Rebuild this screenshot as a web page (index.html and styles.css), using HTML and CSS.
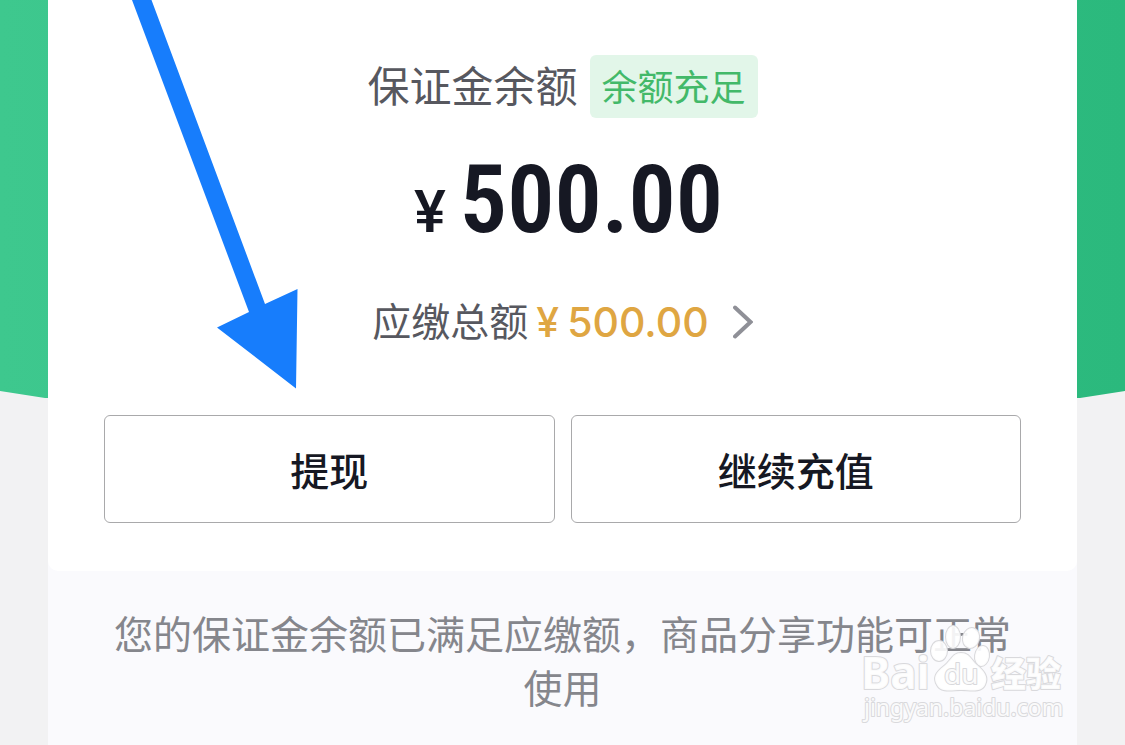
FILE: index.html
```html
<!DOCTYPE html>
<html lang="zh-CN">
<head>
<meta charset="utf-8">
<meta name="viewport" content="width=device-width, initial-scale=1">
<title>保证金余额</title>
<link rel="stylesheet" href="styles.css">
</head>
<body>
<div class="backdrop"></div>
<main class="page">
  <section class="card">
    <div class="balance-head">
      <h1 class="balance-title">保证金余额</h1>
      <span class="badge">余额充足</span>
    </div>
    <p class="balance"><span class="balance-sign">¥</span><span class="balance-value">500.00</span></p>
    <a class="due" href="#">
      <span class="due-label">应缴总额</span>
      <span class="due-sign">¥</span>
      <span class="due-value">500.00</span>
      <svg class="chevron" viewBox="0 0 20 34" aria-hidden="true"><path d="M2 2.500 17.500 17 2 31.500"/></svg>
    </a>
    <div class="actions">
      <button class="action" type="button">提现</button>
      <button class="action" type="button">继续充值</button>
    </div>
  </section>
  <p class="note">您的保证金余额已满足应缴额，商品分享功能可正常使用</p>
</main>
<svg class="arrow" viewBox="0 0 300 390" aria-hidden="true"><path d="M132 0H151.500L265 304 297.500 289 296 388.500 217 327.500 249 312Z"/></svg>
<svg class="watermark" viewBox="0 0 245 145" aria-hidden="true">
  <text class="mark-brand" x="21" y="87">Bai</text>
  <g class="mark-paw">
    <ellipse cx="99" cy="49" rx="8" ry="10"/>
    <ellipse cx="113" cy="35" rx="7" ry="11"/>
    <ellipse cx="131" cy="36" rx="8" ry="10" transform="rotate(14 131 36)"/>
    <ellipse cx="142" cy="54" rx="7" ry="10" transform="rotate(8 142 54)"/>
    <path d="M121 51C112 51 111 59 104 64C95 71 93 76 97 83C101 91 112 88 121 88C130 88 141 91 145 83C149 75 144 69 137 63C131 58 130 51 121 51Z"/>
  </g>
  <text class="mark-du" x="104" y="82">du</text>
  <text class="mark-name" x="151" y="85">经验</text>
  <text class="mark-url" x="24" y="114">jingyan.baidu.com</text>
</svg>
</body>
</html>
```
FILE: styles.css
```css
* { box-sizing: border-box; }

body {
  margin: 0;
  min-height: 100vh;
  position: relative;
  overflow: hidden;
  background: #f2f2f3;
  font-family: "Noto Sans CJK SC", sans-serif;
  color: #161823;
}

.backdrop {
  position: absolute;
  inset: 0 0 auto;
  height: 400px;
  background: linear-gradient(90deg, #3ec88e, #2bb97d);
  clip-path: polygon(0 0, 100% 0, 100% 391px, 96% 398px, 4% 398px, 0 391px);
}

.page {
  position: relative;
  min-height: 100vh;
  margin: 0 48px;
  background: #fafafd;
}

.card {
  padding: 55px 56px 48px;
  border-radius: 0 0 10px 10px;
  background: #fff;
  display: flex;
  flex-direction: column;
  align-items: center;
}

.balance-head {
  display: flex;
  align-items: center;
  gap: 12px;
}

.balance-title {
  margin: 0;
  padding-bottom: 5px;
  font-size: 42px;
  line-height: 58px;
  font-weight: 400;
  color: #57585f;
}

.badge {
  padding: 0 12px 3px;
  border-radius: 6px;
  background: #e2f6e9;
  color: #43b969;
  font-size: 36px;
  line-height: 60px;
}

.balance {
  margin: 22px 0 0;
  padding-left: 12px;
  display: flex;
  align-items: baseline;
  gap: 14px;
  font-family: "Roboto Condensed", Roboto, sans-serif;
  font-weight: 600;
  line-height: 120px;
}

.balance-sign {
  font-family: Roboto, sans-serif;
  font-size: 60px;
  font-weight: 500;
}

.balance-value { font-size: 94px; }

.due {
  margin-top: 20px;
  display: flex;
  align-items: center;
  color: #57585f;
  font-size: 39px;
  line-height: 60px;
  text-decoration: none;
}

.due-label {
  padding-bottom: 6px;
  line-height: 54px;
}

.due-sign,
.due-value {
  margin-left: 8px;
  color: #dfa642;
  font-family: Inter, sans-serif;
  font-size: 41px;
  font-weight: 500;
}

.chevron {
  width: 20px;
  height: 34px;
  margin-left: 24px;
  fill: none;
  stroke: #8f9097;
  stroke-width: 4;
  stroke-linecap: round;
}

.actions {
  width: 100%;
  margin-top: 63px;
  display: grid;
  grid-template-columns: 1fr 1fr;
  gap: 16px;
}

.action {
  height: 108px;
  padding: 0;
  border: 1px solid #a9a9ab;
  border-radius: 6px;
  background: #fff;
  color: #161823;
  font: 500 39px/60px "Noto Sans CJK SC", sans-serif;
}

.note {
  margin: 0;
  padding: 34px 56px;
  color: #85868c;
  font-size: 39px;
  line-height: 54px;
  text-align: center;
}

.arrow {
  position: absolute;
  top: 0;
  left: 0;
  width: 300px;
  height: 390px;
  fill: #177dfc;
}

.watermark {
  position: absolute;
  right: 40px;
  bottom: 0;
  width: 245px;
  height: 145px;
  fill: #fff;
  fill-opacity: 0.9;
  stroke: #d9d9dc;
  stroke-width: 2;
  stroke-linejoin: round;
  paint-order: stroke;
}

.mark-brand { font: 700 44px "Noto Sans", sans-serif; }
.mark-du { font: 400 28px "Noto Sans", sans-serif; }
.mark-name { font: 900 35px "Noto Sans CJK SC", sans-serif; }
.mark-url { font: 400 23px "Noto Sans", sans-serif; }
```
